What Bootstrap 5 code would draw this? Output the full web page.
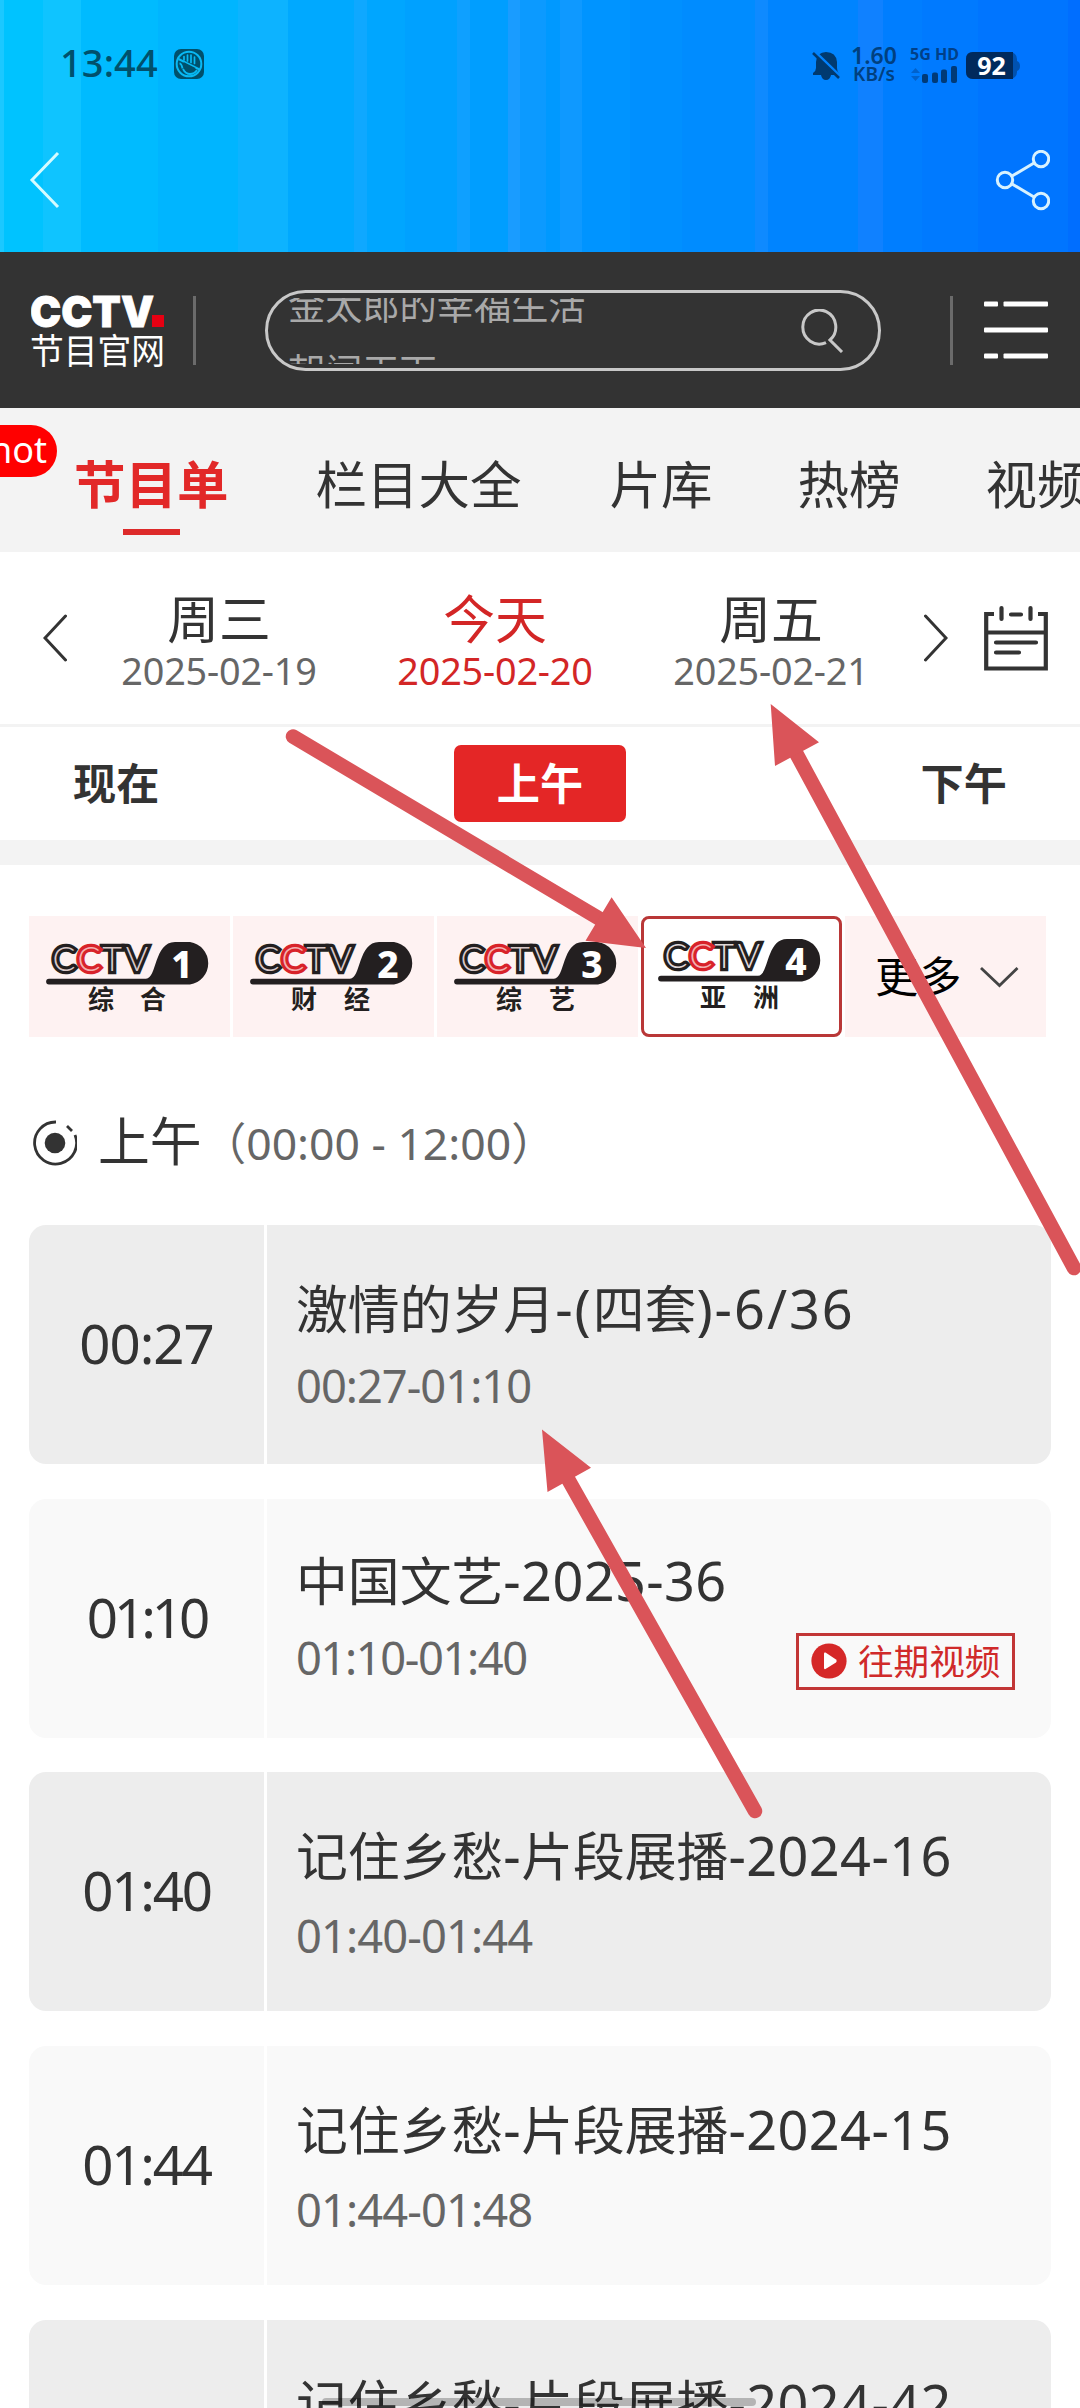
<!DOCTYPE html>
<html lang="zh-CN">
<head>
<meta charset="utf-8">
<meta name="viewport" content="width=device-width, initial-scale=1">
<title>CCTV 节目官网</title>
<link href="https://cdn.jsdelivr.net/npm/bootstrap@5.3.0/dist/css/bootstrap.min.css" rel="stylesheet">
<style>
body{font-family:"Noto Sans","Noto Sans CJK SC",sans-serif;color:#333;background:#fff;}
.screen{width:1080px;height:2408px;}
.screen svg{display:block;flex:none}
.cjk{font-family:"Noto Sans CJK SC",sans-serif}
.topbar{height:252px;background:linear-gradient(90deg,#1cc8ff 0 4px,#00c3ff 4px 43px,#0fc4ff 43px 81px,#00bbff 81px 158px,#00b5ff 158px 238px,#0db3ff 238px 288px,#00a9ff 288px 354px,#0fa8ff 354px 367px,#00a6ff 367px 405px,#00a1ff 405px 457px,#0fa0ff 457px 470px,#009eff 470px 508px,#1a9cff 508px 520px,#0c9aff 520px 546px,#0099ff 546px 560px,#0f99ff 560px 582px,#0094ff 582px 630px,#0090ff 630px 682px,#008cff 682px 755px,#0f8aff 755px 768px,#0084ff 768px 858px,#1081ff 858px 883px,#007eff 883px 922px,#007aff 922px 978px,#0075ff 978px 1068px,#006eff 1068px)}
.statusrow{height:84px;padding:0 60px}
.clock{font-size:38px;line-height:44px;font-weight:500;color:#00506c;letter-spacing:.1px;width:114px}
.dnd{margin-top:49px}
.stat{padding-top:46px}
.netspeed{color:#00407f;font-weight:600;font-size:23px;line-height:17px;width:52px;padding-top:1px}
.netspeed div:last-child{font-size:19px;line-height:20px}
.netgen{color:#004088;font-weight:700;font-size:16px;line-height:16px}
.netbox{width:62px;padding-left:6px}
.batt{margin-top:52px}
.actions{padding:66px 30px 0 28px}
.siterow{height:156px;background:#333;padding-left:31px}
.vline{width:3px;height:69px;background:#6b6b6b}
.searchbox{width:616px;height:81px;border:3px solid #c8c8c8;border-radius:41px;margin-left:69px;padding:5px 34px 4px 20px}
.hints{height:66px;overflow:hidden;font-size:37.2px;line-height:66px;color:#a9a9a9}
.hints div{margin-top:-27px}
.mainnav{height:144px;background:#f3f3f3;padding:3px 0 0 74px;font-size:51.5px;line-height:52px;flex-wrap:nowrap}
.mainnav .nav-link{padding:0;color:#333;white-space:nowrap}
.mainnav .nav-link.active{color:#e22828;font-weight:700;margin-right:87px}
.gap88{margin-right:88px}.gap84{margin-right:85px}
.bar-u{width:57px;height:6px;background:#dd2a2a;left:49px;top:73px}
.hotpill{left:-24px;top:17px;width:81px;height:52px;border-radius:26px;background:#f00;color:#fff;font:36px/50px "Noto Sans",sans-serif;padding-right:10px}
.dates{height:172px;padding:0 32px 0 43px}
.dates .dcol{width:276px;text-align:center}
.dname{font-size:51.84px;line-height:52px}
.dnum{font-size:37.8px;line-height:40px;color:#666;letter-spacing:-.2px;margin-top:8px}
.today,.today .dnum{color:#d32626}
.periods{height:116px;border-top:3px solid #f3f3f3;font-size:43.2px;line-height:60px;font-weight:700;padding:0 73px}
.periods span{margin-top:-5px}
.btn-now{background:#e42626;color:#fff!important;width:172px;height:77px;border-radius:7px;font:inherit;padding:0 0 5px;border:0}
.strip{height:25px;background:#f3f3f3}
.channels{padding:51px 0 0 29px;gap:3px}
.tile{width:201px;height:121px;background:#fef2f2}
.tile.on{background:#fff;border:3px solid #b93737;border-radius:8px}
.tile.on svg{margin:-6px 0 0 -3px}
.tile svg{overflow:visible}
.lg{font-family:Lato,sans-serif;font-weight:300;font-size:34px;stroke-width:6.5px;paint-order:stroke;text-anchor:middle}
.num{font-family:"Noto Sans",sans-serif;font-weight:800;font-size:37px;fill:#fff;text-anchor:middle}
.sub{font-family:"Noto Sans CJK SC",sans-serif;font-weight:700;font-size:26px;fill:#231f20}
.more{font-size:43.2px;color:#000;padding:0 0 4px 30px}
.more svg{margin:4px 0 0 18px}
.heading{padding:75px 0 0 33px;height:188px}
.h-name{font-size:51.84px;line-height:64px;margin:-5px 0 0 21px}
.h-range{font-size:44.5px;line-height:60px;color:#666;margin-top:1px}
.list{padding:0 29px;gap:34.6px}
.prog{height:239.1px;border-radius:17px;background:#ededed;overflow:hidden;flex:none}
.prog.alt{background:#f9f9f9}
.ptime{width:238px;height:100%;border-right:3px solid #fff;font-size:54.6px;letter-spacing:-1px;padding-bottom:1px}
.t1{letter-spacing:-2.2px}.t2{letter-spacing:-4px}
.ptitle{font-size:51.84px;line-height:60px;white-space:nowrap}
.ptitle span{font-size:54px;letter-spacing:.4px}
.wide .ptitle span{letter-spacing:2px}
.prange{font-size:45.3px;line-height:50px;color:#666;letter-spacing:-1px;margin-top:22px}
.low .prange{margin-top:25px;letter-spacing:-.9px}
.pbody{padding:53px 0 0 29px}
.up .pbody{padding-top:51px}
.up .prange{letter-spacing:-1.4px}
.watch{width:219px;height:57px;border:3px solid #c23636;right:36px;top:134px;color:#d02a2a;font-size:35.6px;padding:0 0 3px 12px;gap:11px;line-height:40px}
.watch svg{margin-top:3px}
.homebar{left:322px;top:2398px;width:434px;height:8px;border-radius:4px;background:rgba(0,0,0,.24)}
</style>
</head>
<body>
<div class="screen position-relative overflow-hidden d-flex flex-column">
  <header class="topbar flex-shrink-0">
    <div class="statusrow d-flex">
      <div class="clock mt-auto">13:44</div>
      <svg class="dnd" width="30" height="30" viewBox="0 0 30 30"><rect width="30" height="30" rx="7" fill="#00506c"/><circle cx="15" cy="15" r="12.300" fill="none" stroke="#08b9f4" stroke-width="2"/><path d="M4.500 10L25.500 20.500" stroke="#08b9f4" stroke-width="2"/><path d="M10 11V7.500M13.500 12V6M17 13.500V6M20.500 14.500V8" stroke="#08b9f4" stroke-width="1.700" stroke-linecap="round"/><path d="M5.500 14.500q2 0 3 5M9 20q2.500 5 7 5t7-4" fill="none" stroke="#08b9f4" stroke-width="1.800"/><path d="M9.500 13l12 6q-2 4-6 4-5 0-6-10z" fill="#00506c"/></svg>
      <div class="stat d-flex ms-auto">
        <svg width="28" height="32" viewBox="0 0 28 32" class="me-2 mt-1"><path d="M1 25v-2q3-2 3-5v-6Q5 2 14 2q10 0 11 10v6q0 3 2 6v1h-8q-1 5-5 5t-5-5z" fill="#003a70"/><path d="M1 0L30 28" stroke="#0082ff" stroke-width="3"/><path d="M1 3L27 28" stroke="#003a70" stroke-width="2.600"/></svg>
        <div class="netspeed text-center"><div>1.60</div><div>KB/s</div></div>
        <div class="netbox ms-1"><div class="netgen text-nowrap">5G HD</div>
          <svg width="48" height="17" viewBox="0 0 48 17" class="mt-1"><path d="M1 7l4.500-5L10 7zM1 10h9l-4.500 5z" fill="#0062cc"/><g fill="#003a78"><rect x="12" y="8" width="6" height="9" rx="2"/><rect x="22" y="6.500" width="6" height="10.500" rx="2"/><rect x="31" y="3.500" width="6" height="13.500" rx="2"/><rect x="41" y="0" width="6" height="17" rx="2"/></g></svg></div>
      </div>
      <svg class="batt" width="54" height="28" viewBox="0 0 54 28"><rect width="51" height="27" rx="7" fill="#0052b0"/><path d="M51 9q3 1 3 5t-3 5z" fill="#0052b0"/><path d="M7 0h40v27H7q-7 0-7-7V7q0-7 7-7z" fill="#002a5c"/><text x="25.500" y="23" text-anchor="middle" font-family="Noto Sans,sans-serif" font-weight="700" font-size="25" fill="#fff">92</text></svg>
    </div>
    <div class="actions d-flex justify-content-between">
      <svg width="32" height="60" viewBox="0 0 32 60"><path d="M30 3L4 30l26 27" fill="none" stroke="#d5fbff" stroke-width="3"/></svg>
      <svg width="56" height="64" viewBox="0 0 56 64" fill="none" stroke="#d8f2ff" stroke-width="3"><circle cx="11" cy="30" r="7.700"/><circle cx="47" cy="9" r="7.700"/><circle cx="47" cy="51" r="7.700"/><path d="M18 26l22-13M18 34l22 13"/></svg>
    </div>
  </header>

  <div class="siterow d-flex align-items-center flex-shrink-0">
    <svg width="133" height="78" viewBox="0 0 133 78"><text x="-1" y="36" font-family="Inter,sans-serif" font-weight="900" font-size="43" fill="#fff" stroke="#fff" stroke-width=".8" textLength="124" lengthAdjust="spacingAndGlyphs">CCTV</text><rect x="121" y="24" width="12" height="12" fill="#e60012"/><text x="-1" y="73" font-family="Noto Sans CJK SC,sans-serif" font-size="35" fill="#fff" textLength="135" lengthAdjust="spacingAndGlyphs">节目官网</text></svg>
    <div class="vline" style="margin-left:29px"></div>
    <div class="searchbox d-flex align-items-center">
      <div class="hints cjk flex-grow-1"><div>金太郎的幸福生活<br>朝闻天下</div></div>
      <svg width="44" height="44" viewBox="0 0 44 44" fill="none" stroke="#c8c8c8" stroke-width="3"><path d="M26 33.600A16.500 17 0 1 1 30 31L42 43"/></svg>
    </div>
    <div class="vline" style="margin-left:69px"></div>
    <svg width="64" height="58" viewBox="0 0 64 58" style="margin-left:31px"><g fill="#fff"><rect y="0.500" width="14" height="5" rx="1"/><rect x="19.500" y="0.500" width="44.500" height="5" rx="1"/><rect y="26.500" width="64" height="5" rx="1"/><rect y="52.500" width="14" height="5" rx="1"/><rect x="19.500" y="52.500" width="44.500" height="5" rx="1"/></g></svg>
  </div>

  <nav class="mainnav nav cjk align-items-center position-relative flex-shrink-0">
    <span class="hotpill position-absolute text-end">hot</span>
    <a class="nav-link active position-relative">节目单<i class="bar-u position-absolute"></i></a>
    <a class="nav-link gap88">栏目大全</a><a class="nav-link gap84">片库</a><a class="nav-link gap84">热榜</a><a class="nav-link">视频</a>
  </nav>

  <section class="dates d-flex align-items-center flex-shrink-0">
    <svg width="24" height="48" viewBox="0 0 24 48"><path d="M22.500 2L2 24l20.500 22" fill="none" stroke="#333" stroke-width="3" stroke-linecap="round"/></svg>
    <div class="d-flex" style="margin:5px 0 0 14px">
      <div class="dcol"><div class="dname cjk">周三</div><div class="dnum">2025-02-19</div></div>
      <div class="dcol today"><div class="dname cjk">今天</div><div class="dnum">2025-02-20</div></div>
      <div class="dcol"><div class="dname cjk">周五</div><div class="dnum">2025-02-21</div></div>
    </div>
    <svg width="24" height="48" viewBox="0 0 24 48" style="margin-left:15px"><path d="M1.500 2L22 24 1.500 46" fill="none" stroke="#333" stroke-width="3" stroke-linecap="round"/></svg>
    <svg width="64" height="66" viewBox="0 0 64 66" style="margin-left:36px" fill="none" stroke="#333"><path d="M10 9H2.200v54.500h59.600V9H54M2 27.500h60" stroke-width="4.200"/><path d="M27 9.500h10M17.500 3v11M46.500 3v11M12 37.500h40M12 47.500h23" stroke-width="4.200" stroke-linecap="round"/></svg>
  </section>

  <section class="periods cjk d-flex align-items-center justify-content-between flex-shrink-0">
    <span>现在</span><button class="btn btn-now">上午</button><span>下午</span>
  </section>
  <div class="strip flex-shrink-0"></div>

  <svg width="0" height="0" class="position-absolute"><defs>
    <path id="lbase" d="M20 62.700h97C128 62.700 125 26 146 26h15a21.500 21.500 0 0 1 0 42.500H20a2.900 2.900 0 0 1 0-5.800z" fill="#231f20"/>
  </defs></svg>
  <section class="channels d-flex flex-shrink-0">
    <div class="tile"><svg width="201" height="121"><g class="lg"><text y="55" fill="#d9c8c8" stroke="#231f20" x="35">C<tspan x="83">T</tspan><tspan x="108">V</tspan></text><text x="60" y="55" fill="#f3b0b0" stroke="#d8232a">C</text></g><use href="#lbase"/><text x="153" y="62" class="num">1</text><text x="59 111" y="92.500" class="sub">综合</text></svg></div>
    <div class="tile"><svg width="201" height="121"><g class="lg"><text y="55" fill="#d9c8c8" stroke="#231f20" x="35">C<tspan x="83">T</tspan><tspan x="108">V</tspan></text><text x="60" y="55" fill="#f3b0b0" stroke="#d8232a">C</text></g><use href="#lbase"/><text x="155" y="62" class="num">2</text><text x="58 111" y="92.500" class="sub">财经</text></svg></div>
    <div class="tile"><svg width="201" height="121"><g class="lg"><text y="55" fill="#d9c8c8" stroke="#231f20" x="35">C<tspan x="83">T</tspan><tspan x="108">V</tspan></text><text x="60" y="55" fill="#f3b0b0" stroke="#d8232a">C</text></g><use href="#lbase"/><text x="155" y="62" class="num">3</text><text x="59 112" y="92.500" class="sub">综艺</text></svg></div>
    <div class="tile on"><svg width="201" height="121"><g class="lg"><text y="55" fill="#e0d8d8" stroke="#231f20" x="35">C<tspan x="83">T</tspan><tspan x="108">V</tspan></text><text x="60" y="55" fill="#f3b0b0" stroke="#d8232a">C</text></g><use href="#lbase"/><text x="155" y="62" class="num">4</text><text x="59 112" y="94" class="sub">亚洲</text></svg></div>
    <div class="tile more cjk d-flex align-items-center">更多<svg width="40" height="22" viewBox="0 0 40 22"><path d="M2 2l18.500 17.500L38.500 2" fill="none" stroke="#444" stroke-width="2.800"/></svg></div>
  </section>

  <section class="heading d-flex flex-shrink-0">
    <svg width="44" height="46" viewBox="0 0 44 46" style="margin-top:8px"><circle cx="22" cy="23" r="10.300" fill="#333"/><path d="M23 2A21 21 0 1 0 42 15M34 6l5 5" fill="none" stroke="#333" stroke-width="2.800"/></svg>
    <div class="h-name cjk">上午</div>
    <div class="h-range text-nowrap">（00:00 - 12:00）</div>
  </section>

  <main class="list d-flex flex-column">
    <article class="prog wide d-flex"><div class="ptime d-flex align-items-center justify-content-center">00:27</div><div class="pbody"><div class="ptitle">激情的岁月<span>-(</span>四套<span>)-6/36</span></div><div class="prange">00:27-01:10</div></div></article>
    <article class="prog alt up d-flex position-relative"><div class="ptime t2 d-flex align-items-center justify-content-center">01:10</div><div class="pbody"><div class="ptitle">中国文艺<span>-2025-36</span></div><div class="prange">01:10-01:40</div></div>
      <a class="watch cjk position-absolute d-flex align-items-center text-nowrap text-decoration-none"><svg width="36" height="36" viewBox="0 0 36 36"><circle cx="18" cy="18" r="17.600" fill="#d52828"/><path d="M13 10.500q0-1.500 1.500-1L25 16.500q1.500 1.500 0 3L14.500 26q-1.500 .5-1.500-1z" fill="#fff"/></svg>往期视频</a></article>
    <article class="prog low d-flex"><div class="ptime t1 d-flex align-items-center justify-content-center">01:40</div><div class="pbody"><div class="ptitle">记住乡愁<span>-</span>片段展播<span>-2024-16</span></div><div class="prange">01:40-01:44</div></div></article>
    <article class="prog alt low d-flex"><div class="ptime t1 d-flex align-items-center justify-content-center">01:44</div><div class="pbody"><div class="ptitle">记住乡愁<span>-</span>片段展播<span>-2024-15</span></div><div class="prange">01:44-01:48</div></div></article>
    <article class="prog d-flex"><div class="ptime"></div><div class="pbody"><div class="ptitle">记住乡愁<span>-</span>片段展播<span>-2024-42</span></div></div></article>
  </main>

  <div class="homebar position-absolute"></div>
  <svg class="position-absolute top-0 start-0 pe-none" width="1080" height="2408" viewBox="0 0 1080 2408" fill="#da5459">
    <g stroke="#da5459" stroke-width="14.500" stroke-linecap="round"><path d="M293 736.500L600 919"/><path d="M1074 1268L796 753"/><path d="M755 1811L568 1479"/></g>
    <path d="M646 948l-34.400-50.700L585.500 940.700zM770.700 704l48.300 38.300L775 766zM542 1429.600l49 38.200L547.500 1492z"/>
  </svg>
</div>
<script src="https://cdn.jsdelivr.net/npm/bootstrap@5.3.0/dist/js/bootstrap.bundle.min.js"></script>
</body>
</html>
